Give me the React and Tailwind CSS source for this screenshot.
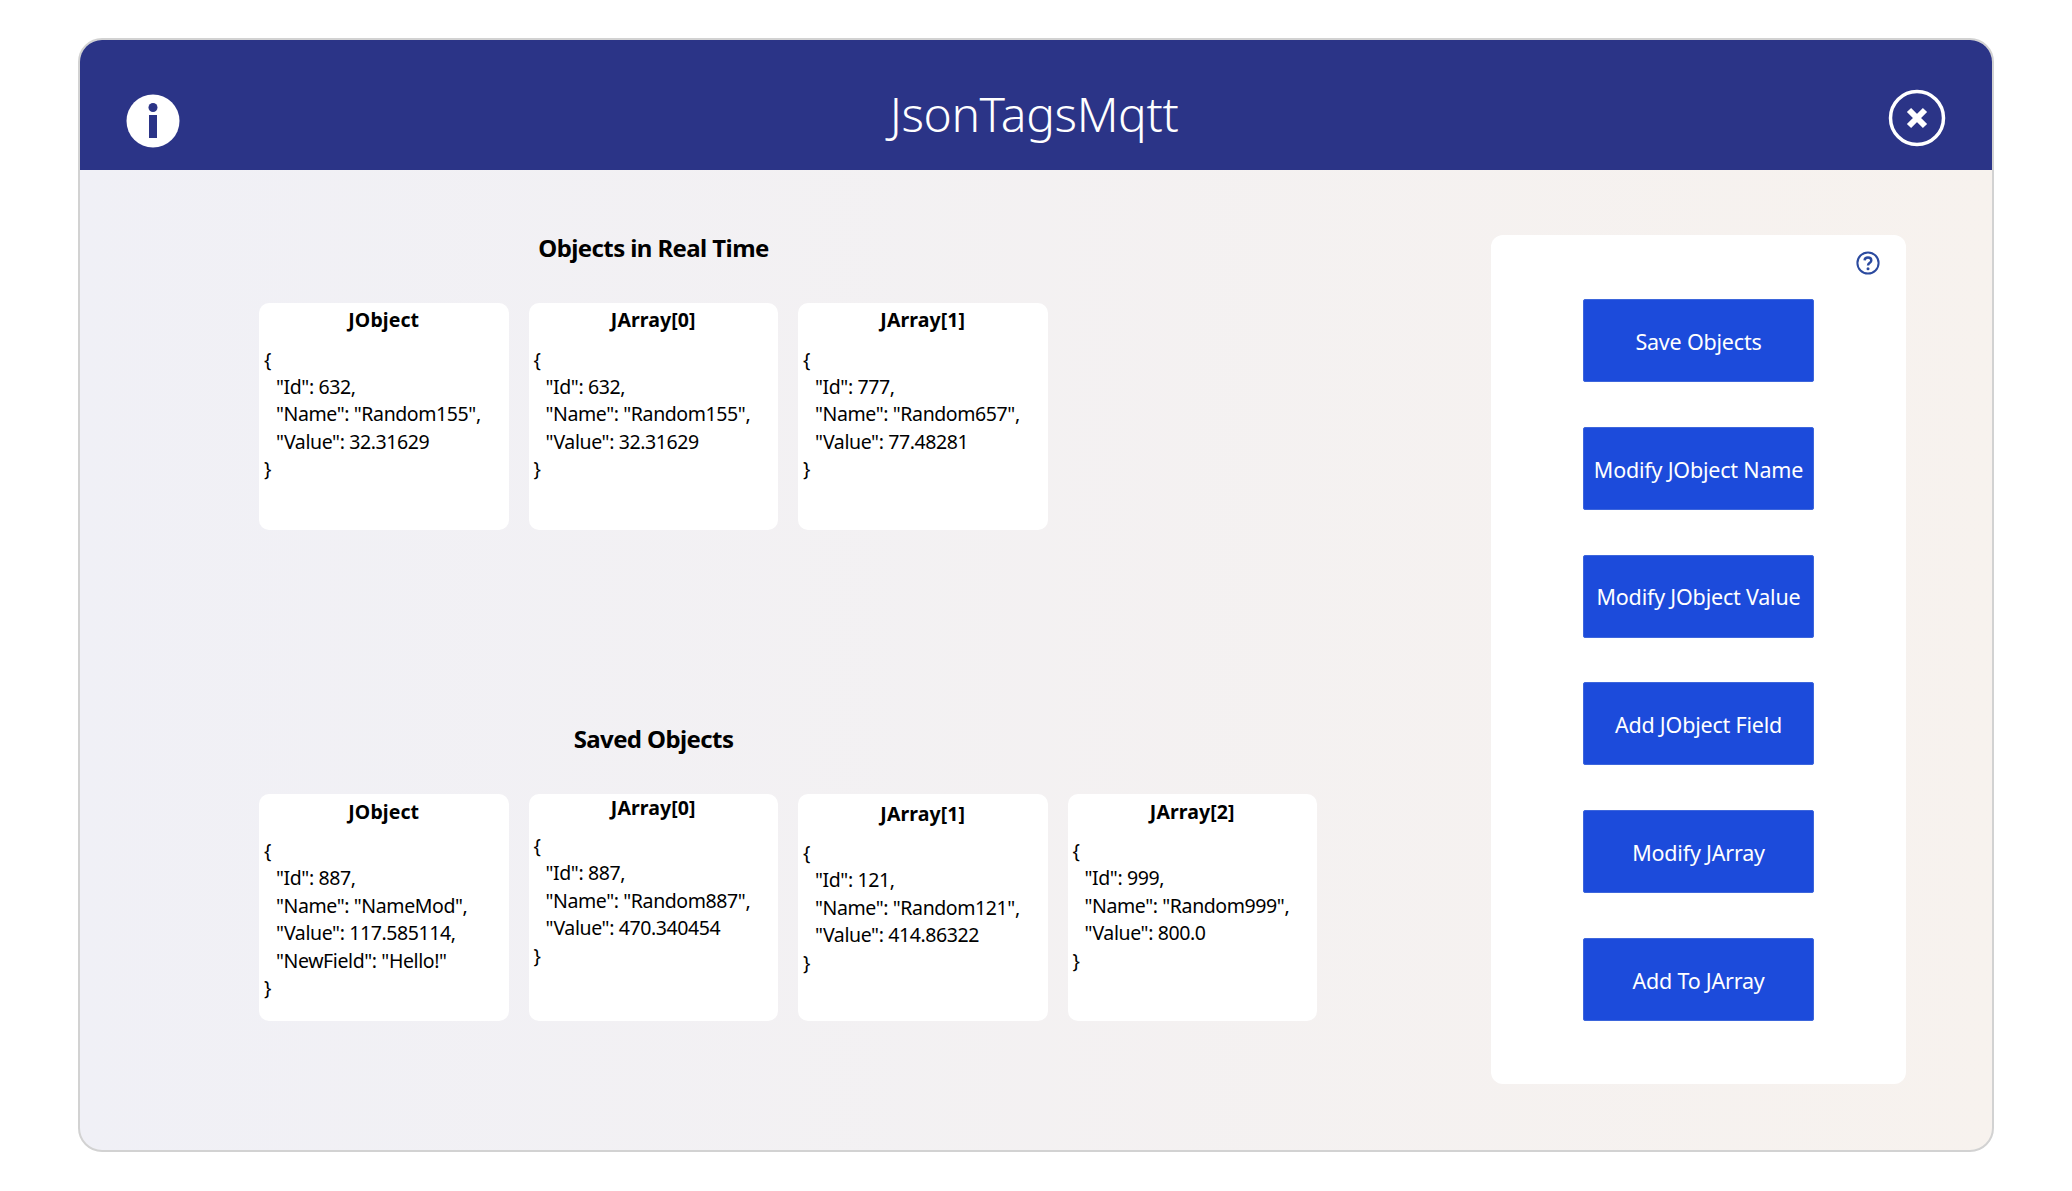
const FONT = "font-['Noto_Sans','Open_Sans',sans-serif]";

const LIVE = [
  { title: "JObject", lines: ['"Id": 632,', '"Name": "Random155",', '"Value": 32.31629'] },
  { title: "JArray[0]", lines: ['"Id": 632,', '"Name": "Random155",', '"Value": 32.31629'] },
  { title: "JArray[1]", lines: ['"Id": 777,', '"Name": "Random657",', '"Value": 77.48281'] },
];

const SAVED = [
  { title: "JObject", titleClass: "pt-[4px]", bodyClass: "mt-[12px]", lines: ['"Id": 887,', '"Name": "NameMod",', '"Value": 117.585114,', '"NewField": "Hello!"'] },
  { title: "JArray[0]", titleClass: "pt-0", bodyClass: "mt-[11px]", lines: ['"Id": 887,', '"Name": "Random887",', '"Value": 470.340454'] },
  { title: "JArray[1]", titleClass: "pt-[6px]", bodyClass: "mt-[12px]", lines: ['"Id": 121,', '"Name": "Random121",', '"Value": 414.86322'] },
  { title: "JArray[2]", titleClass: "pt-[4px]", bodyClass: "mt-[12px]", lines: ['"Id": 999,', '"Name": "Random999",', '"Value": 800.0'] },
];

const BUTTONS = [
  "Save Objects",
  "Modify JObject Name",
  "Modify JObject Value",
  "Add JObject Field",
  "Modify JArray",
  "Add To JArray",
];

function InfoIcon() {
  return (
    <svg width="54" height="54" viewBox="0 0 54 54" className="shrink-0">
      <circle cx="27" cy="27" r="26.5" fill="#fff" />
      <circle cx="27" cy="13.5" r="4.5" fill="#2b3487" />
      <rect x="23" y="21" width="8" height="23" fill="#2b3487" />
    </svg>
  );
}

function CloseIcon() {
  return (
    <svg width="58" height="58" viewBox="0 0 58 58" className="shrink-0">
      <circle cx="29" cy="29" r="26.5" fill="none" stroke="#fff" strokeWidth="3.5" />
      <path d="M21 21 L37 37 M37 21 L21 37" stroke="#fff" strokeWidth="6" fill="none" />
    </svg>
  );
}

function HelpIcon() {
  return (
    <svg width="24" height="24" viewBox="0 0 24 24" className="shrink-0">
      <circle cx="12" cy="12" r="10.6" fill="none" stroke="#2b4a9f" strokeWidth="2" />
      <path d="M8.6 9.4 C8.7 5.6 15.3 5.6 15.3 9.4 C15.3 11.8 12 11.8 12 14.6" fill="none" stroke="#2b4a9f" strokeWidth="2.4" />
      <circle cx="12" cy="17.8" r="1.5" fill="#2b4a9f" />
    </svg>
  );
}

function JsonCard({ title, lines, titleClass = "pt-[3px]", bodyClass = "mt-[12.5px]" }) {
  return (
    <div className="w-[249.5px] h-[227px] bg-white rounded-[10px] text-black">
      <div className={`text-center font-bold text-[19.5px] leading-[27px] tracking-[0.1px] ${titleClass}`}>{title}</div>
      <div className={`pl-[5px] text-[19.5px] leading-[27.4px] tracking-[-0.4px] ${bodyClass}`}>
        <div>{"{"}</div>
        {lines.map((line) => (
          <div key={line} className="pl-[12px] whitespace-nowrap">{line}</div>
        ))}
        <div>{"}"}</div>
      </div>
    </div>
  );
}

function Section({ heading, cards }) {
  return (
    <div className="flex flex-col">
      <h2 className="w-[789px] text-center font-bold text-[24px] leading-[32px] tracking-[-0.6px] text-black">{heading}</h2>
      <div className="flex gap-[20px] mt-[39px]">
        {cards.map((card) => (
          <JsonCard key={card.title} {...card} />
        ))}
      </div>
    </div>
  );
}

export default function App() {
  return (
    <div className={`min-h-screen bg-white pl-[78px] pt-[38px] ${FONT}`}>
      <div className="w-[1916px] h-[1114px] rounded-[24px] border-2 border-[#d2d2d2] overflow-hidden flex flex-col bg-gradient-to-r from-[#f0f0f6] to-[#f7f2ee]">
        <header className="h-[130px] shrink-0 bg-[#2b3487] flex items-center justify-between pl-[46px] pr-[46px]">
          <div className="mt-[31px]"><InfoIcon /></div>
          <h1 className="text-white text-[48px] leading-[60px] font-light tracking-[-0.4px] mt-[17px]">JsonTagsMqtt</h1>
          <div className="mt-[26px]"><CloseIcon /></div>
        </header>
        <main className="flex-1 flex pl-[179px]">
          <div className="w-[1232px] flex flex-col gap-[193px] pt-[62px]">
            <Section heading="Objects in Real Time" cards={LIVE} />
            <Section heading="Saved Objects" cards={SAVED} />
          </div>
          <aside className="w-[415px] h-[849px] mt-[65px] bg-white rounded-[12px] flex flex-col items-center">
            <div className="w-full flex justify-end pr-[26px] pt-[16px] h-[64px]"><HelpIcon /></div>
            <div className="flex flex-col gap-[44.75px]">
              {BUTTONS.map((label) => (
                <button
                  key={label}
                  className="w-[231px] h-[83px] pt-[2px] bg-[#1c4bdb] border border-[#3d66dc] rounded-[2px] text-white text-[21.5px] tracking-[-0.2px] leading-none whitespace-nowrap"
                >
                  {label}
                </button>
              ))}
            </div>
          </aside>
        </main>
      </div>
    </div>
  );
}
